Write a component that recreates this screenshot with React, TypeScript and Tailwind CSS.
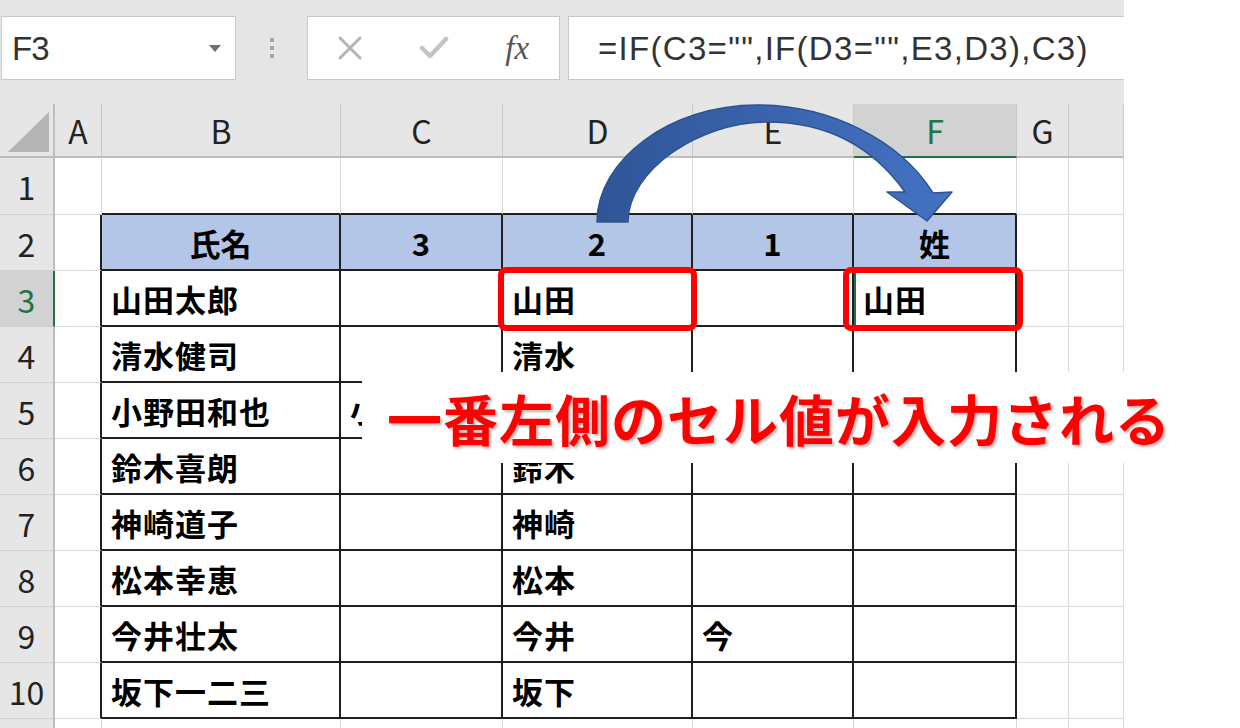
import React from "react";

const COLS = ["A", "B", "C", "D", "E", "F", "G", ""];
const ROW_COUNT = 11;

type CellData = { text: string; center?: boolean; clipW?: boolean; clipTop?: boolean };

const DATA: Record<string, CellData> = {
  "2-1": { text: "氏名", center: true },
  "2-2": { text: "3", center: true },
  "2-3": { text: "2", center: true },
  "2-4": { text: "1", center: true },
  "2-5": { text: "姓", center: true },
  "3-1": { text: "山田太郎" },
  "3-3": { text: "山田" },
  "3-5": { text: "山田" },
  "4-1": { text: "清水健司" },
  "4-3": { text: "清水" },
  "5-1": { text: "小野田和也" },
  "5-2": { text: "小野田", clipW: true },
  "6-1": { text: "鈴木喜朗" },
  "6-3": { text: "鈴木", clipTop: true },
  "7-1": { text: "神崎道子" },
  "7-3": { text: "神崎" },
  "8-1": { text: "松本幸恵" },
  "8-3": { text: "松本" },
  "9-1": { text: "今井壮太" },
  "9-3": { text: "今井" },
  "9-4": { text: "今" },
  "10-1": { text: "坂下一二三" },
  "10-3": { text: "坂下" },
};

function cellClass(r: number, c: number): string {
  const inTable = r >= 2 && r <= 10 && c >= 1 && c <= 5;
  const blackRight = inTable || (c === 0 && r >= 2 && r <= 10);
  const blackBottom = inTable || (r === 1 && c >= 1 && c <= 5);
  const parts: string[] = [];
  parts.push(blackRight ? "border-r-2 border-r-[#1f1f1f]" : "border-r border-r-[#d9d9d9]");
  parts.push(blackBottom ? "border-b-2 border-b-[#1f1f1f]" : "border-b border-b-[#d9d9d9]");
  if (r === 2 && c >= 1 && c <= 5) parts.push("bg-[#b4c6e7]");
  else parts.push("bg-white");
  return parts.join(" ");
}

function NameBox() {
  return (
    <div className="ml-px flex h-[64px] w-[235px] items-center justify-between border border-[#c8c8c8] bg-white pl-[10px] pr-[14px]">
      <span className="font-['Liberation_Sans',sans-serif] text-[33px] leading-none text-[#333] tracking-[-1px]">F3</span>
      <svg width="12" height="7" viewBox="0 0 12 7">
        <path d="M0 0 L12 0 L6 7 Z" fill="#6e6e6e" />
      </svg>
    </div>
  );
}

function Dots() {
  return (
    <div className="flex w-[71px] flex-col items-center justify-center gap-[4px]">
      <div className="h-[4px] w-[4px] bg-[#a6a6a6]" />
      <div className="h-[4px] w-[4px] bg-[#a6a6a6]" />
      <div className="h-[4px] w-[4px] bg-[#a6a6a6]" />
    </div>
  );
}

function FxBox() {
  return (
    <div className="flex h-[64px] w-[253px] items-center border border-[#c8c8c8] bg-white">
      <div className="flex w-[84px] justify-center">
        <svg width="26" height="26" viewBox="0 0 26 26">
          <path d="M3 3 L23 23 M23 3 L3 23" stroke="#b3b3b3" strokeWidth="3" strokeLinecap="round" />
        </svg>
      </div>
      <div className="flex w-[84px] justify-center">
        <svg width="30" height="26" viewBox="0 0 30 26">
          <path d="M3 13 L11 21 L27 4" stroke="#c4c4c4" strokeWidth="4.5" fill="none" strokeLinecap="round" strokeLinejoin="round" />
        </svg>
      </div>
      <div className="flex w-[84px] justify-center">
        <span className="font-['Liberation_Serif',serif] text-[33px] italic leading-none text-[#555]">
          fx
        </span>
      </div>
    </div>
  );
}

function FormulaBox() {
  return (
    <div className="flex h-[64px] flex-1 items-center border-y border-l border-[#c8c8c8] bg-white pl-[29px]">
      <span className="font-['Liberation_Sans',sans-serif] text-[33px] leading-none tracking-[1.3px] text-[#333] whitespace-nowrap">
        =IF(C3="",IF(D3="",E3,D3),C3)
      </span>
    </div>
  );
}

const CELL_TEXT =
  "font-['Noto_Sans_CJK_JP',sans-serif] text-[31px] font-bold leading-none tracking-[1px] text-black whitespace-nowrap";

function CellContent({ d }: { d: CellData }) {
  if (d.center) {
    return (
      <span className="w-full text-center font-['Noto_Sans_CJK_JP',sans-serif] text-[31px] font-bold leading-none text-black whitespace-nowrap">
        {d.text}
      </span>
    );
  }
  if (d.clipW) {
    return (
      <span className="ml-[9px] block w-[12px] overflow-hidden">
        <span className={CELL_TEXT}>{d.text}</span>
      </span>
    );
  }
  if (d.clipTop) {
    return (
      <div className="absolute inset-x-0 bottom-0 top-[24px] overflow-hidden">
        <div className="absolute left-0 top-[-24px] flex h-[54px] items-center pl-[9px]">
          <span className={CELL_TEXT}>{d.text}</span>
        </div>
      </div>
    );
  }
  return <span className={"pl-[9px] " + CELL_TEXT}>{d.text}</span>;
}

function Sheet() {
  const rows: React.ReactNode[] = [];
  rows.push(
    <div key="corner" className="relative border-r-2 border-r-[#bdbdbd] border-b-2 border-b-[#bdbdbd] bg-[#e6e6e6]">
      <svg className="absolute left-0 top-0" width="55" height="54" viewBox="0 0 55 54">
        <path d="M49 8 L49 48 L8 48 Z" fill="#b4b4b4" />
      </svg>
    </div>
  );
  COLS.forEach((col, ci) => {
    const sel = col === "F";
    rows.push(
      <div
        key={"h" + ci}
        className={
          sel
            ? "flex items-center justify-center border-r border-r-[#c8c8c8] border-b-2 border-b-[#217346] bg-[#d2d2d2] font-['Noto_Sans_CJK_JP',sans-serif] text-[32px] leading-none text-[#217346]"
            : "flex items-center justify-center border-r border-r-[#c8c8c8] border-b-2 border-b-[#bdbdbd] bg-[#e6e6e6] font-['Noto_Sans_CJK_JP',sans-serif] text-[32px] leading-none text-[#222]"
        }
      >
        {col}
      </div>
    );
  });
  for (let r = 1; r <= ROW_COUNT; r++) {
    const selRow = r === 3;
    rows.push(
      <div
        key={"r" + r}
        className={
          selRow
            ? "flex items-center justify-center border-r-2 border-r-[#217346] border-b border-b-[#d0d0d0] bg-[#d2d2d2] font-['Noto_Sans_CJK_JP',sans-serif] text-[32px] leading-none text-[#217346]"
            : "flex items-center justify-center border-r-2 border-r-[#bdbdbd] border-b border-b-[#d0d0d0] bg-[#e6e6e6] font-['Noto_Sans_CJK_JP',sans-serif] text-[32px] leading-none text-[#222]"
        }
      >
        {r <= 10 ? r : ""}
      </div>
    );
    for (let c = 0; c < COLS.length; c++) {
      const d = DATA[`${r}-${c}`];
      const isF3 = r === 3 && c === 5;
      rows.push(
        <div key={`c${r}-${c}`} className={"relative flex items-center overflow-hidden " + cellClass(r, c)}>
          {isF3 && <div className="absolute left-0 top-0 h-full w-[2px] bg-[#217346]" />}
          {d && <CellContent d={d} />}
        </div>
      );
    }
  }
  return (
    <div className="grid grid-cols-[55px_47px_239px_162px_190px_161px_163px_52px_55px] grid-rows-[54px_57px_56px_56px_56px_56px_56px_56px_56px_56px_56px_40px]">
      {rows}
    </div>
  );
}

function Arrow() {
  return (
    <svg className="pointer-events-none absolute left-0 top-0" width="1240" height="728" viewBox="0 0 1240 728">
      <defs>
        <linearGradient id="ag" gradientUnits="userSpaceOnUse" x1="597" y1="0" x2="952" y2="0">
          <stop offset="0" stopColor="#2f5597" />
          <stop offset="0.5" stopColor="#3a64ae" />
          <stop offset="1" stopColor="#4472c4" />
        </linearGradient>
      </defs>
      <path
        d="M597 222 C597 160 670 105 757 105 C830 105 900 140 933 193 L952 192 L927 221 L887 192 L905 192 C875 150 830 122 767 122 C700 122 628 170 628 222 Z"
        fill="url(#ag)"
        stroke="#2f528f"
        strokeWidth="1.5"
        strokeLinejoin="round"
      />
    </svg>
  );
}

export default function App() {
  return (
    <div className="relative h-[728px] w-[1240px] overflow-hidden bg-white">
      <div className="w-[1124px]">
        <div className="h-[104px] bg-[#e6e6e6] pt-[16px]">
          <div className="flex">
            <NameBox />
            <Dots />
            <FxBox />
            <div className="w-[8px]" />
            <FormulaBox />
          </div>
        </div>
        <Sheet />
      </div>

      <div className="pointer-events-none absolute left-[498px] top-[267px] h-[64px] w-[199px] rounded-[8px] border-[6px] border-[#ff0000]" />
      <div className="pointer-events-none absolute left-[843px] top-[267px] h-[64px] w-[180px] rounded-[8px] border-[6px] border-[#ff0000]" />

      <Arrow />

      <div className="absolute left-[362px] top-[372px] flex h-[91px] w-[830px] items-center bg-white pl-[25px]">
        <span className="font-['Noto_Sans_CJK_JP',sans-serif] text-[55px] font-bold leading-none tracking-[1px] text-[#ff0000] whitespace-nowrap [text-shadow:2px_2px_3px_rgba(0,0,0,0.3)]">
          一番左側のセル値が入力される
        </span>
      </div>
    </div>
  );
}
